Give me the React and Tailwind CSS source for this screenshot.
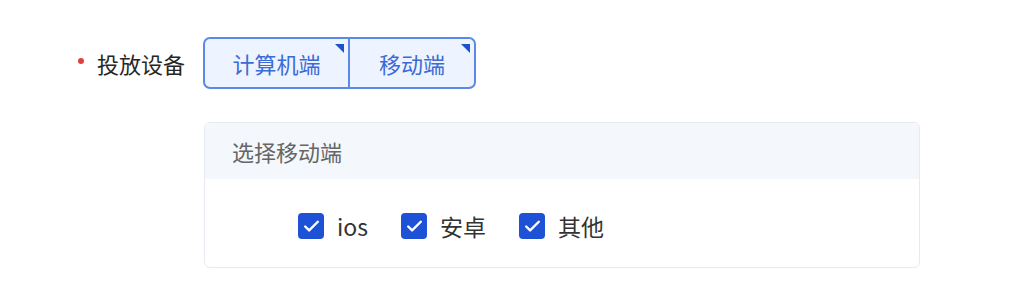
import { Check } from 'lucide-react';

const font = { fontFamily: '"Noto Sans CJK SC", "Noto Sans", sans-serif' };

function SegButton({ label, width, last }) {
  return (
    <div
      className={`relative flex items-center justify-center h-full text-[22px] text-[#3a6bd6] ${last ? '' : 'border-r-2 border-[#5b8ae6]'}`}
      style={{ width }}
    >
      {label}
      <span className="absolute top-[5px] right-[4px] w-0 h-0 border-t-[9px] border-l-[9px] border-t-[#1f52c8] border-l-transparent" />
    </div>
  );
}

function CheckItem({ label }) {
  return (
    <label className="flex items-center gap-[13px]">
      <span className="flex items-center justify-center w-[26px] h-[26px] rounded-[4px] bg-[#1e52d6]">
        <Check size={19} strokeWidth={3} className="text-white" />
      </span>
      <span className="text-[23px] text-[#333]">{label}</span>
    </label>
  );
}

export default function App() {
  const devices = ['ios', '安卓', '其他'];
  return (
    <div className="w-[1012px] h-[308px] bg-white pt-[37px] pl-[78px]" style={font}>
      <div className="flex items-center">
        <div className="flex items-center w-[125px] text-[22px] text-[#262626]">
          <span className="w-[6px] h-[6px] rounded-full bg-[#e0403a] mr-[13px] -mt-[5px]" />
          投放设备
        </div>
        <div className="flex h-[52px] border-2 border-[#5b8ae6] rounded-[7px] bg-[#eef4ff]">
          <SegButton label="计算机端" width={145} />
          <SegButton label="移动端" width={124} last />
        </div>
      </div>

      <div className="ml-[126px] mt-[33px] w-[716px] h-[146px] border border-[#e7eaf0] rounded-[6px] overflow-hidden">
        <div className="h-[56px] bg-[#f4f7fb] flex items-center pl-[27px] text-[22px] text-[#666]">
          选择移动端
        </div>
        <div className="flex items-center gap-[33px] pl-[93px] pt-[30px]">
          {devices.map((d) => (
            <CheckItem key={d} label={d} />
          ))}
        </div>
      </div>
    </div>
  );
}
